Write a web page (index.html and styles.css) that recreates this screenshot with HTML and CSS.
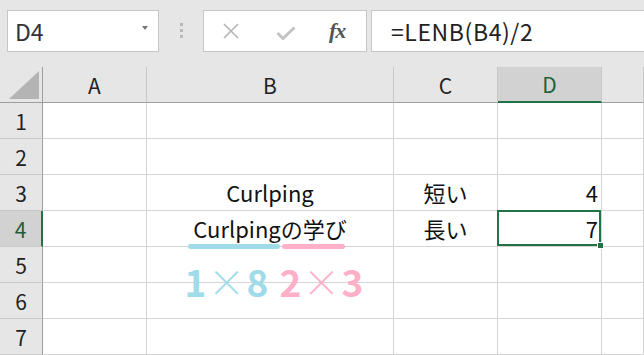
FILE: index.html
```html
<!DOCTYPE html>
<html lang="ja">
<head>
    <meta charset="UTF-8">
    <title>LENB</title>
    <link rel="stylesheet" href="styles.css">
</head>
<body>
    <!-- Formula bar -->
    <div class="toolbar">
        <div class="namebox">
            <span>D4</span>
            <span class="arrow"></span>
        </div>
        <div class="grip"><i></i><i></i><i></i></div>
        <div class="fbuttons">
            <svg class="btn-x" viewBox="0 0 18 16"><path d="M2 1L16 15M16 1L2 15" stroke="#b4b4b4" stroke-width="1.6" fill="none"/></svg>
            <svg class="btn-ok" viewBox="0 0 20 14"><path d="M1.5 7L7 12.5L18.5 1.5" stroke="#c4c4c4" stroke-width="3" fill="none"/></svg>
            <span class="fx">fx</span>
        </div>
        <div class="formula">=LENB(B4)/2</div>
    </div>

    <!-- Sheet grid -->
    <div class="sheet">
        <div class="hdr corner"><svg viewBox="0 0 30 28"><polygon points="30,0 30,28 0,28" fill="#b4b4b4"/></svg></div>
        <div class="hdr col">A</div>
        <div class="hdr col">B</div>
        <div class="hdr col">C</div>
        <div class="hdr col active">D</div>
        <div class="hdr col"></div>

        <div class="hdr row">1</div>
        <div class="cell"></div><div class="cell"></div><div class="cell"></div><div class="cell"></div><div class="cell"></div>

        <div class="hdr row">2</div>
        <div class="cell"></div><div class="cell"></div><div class="cell"></div><div class="cell"></div><div class="cell"></div>

        <div class="hdr row">3</div>
        <div class="cell"></div>
        <div class="cell center">Curlping</div>
        <div class="cell center">短い</div>
        <div class="cell num">4</div>
        <div class="cell"></div>

        <div class="hdr row active">4</div>
        <div class="cell"></div>
        <div class="cell center">Curlpingの学び</div>
        <div class="cell center">長い</div>
        <div class="cell num selected">7<span class="handle"></span></div>
        <div class="cell"></div>

        <div class="hdr row">5</div>
        <div class="cell"></div><div class="cell"></div><div class="cell"></div><div class="cell"></div><div class="cell"></div>

        <div class="hdr row">6</div>
        <div class="cell"></div><div class="cell"></div><div class="cell"></div><div class="cell"></div><div class="cell"></div>

        <div class="hdr row">7</div>
        <div class="cell"></div><div class="cell"></div><div class="cell"></div><div class="cell"></div><div class="cell"></div>
    </div>

    <!-- Drawn annotation over the sheet -->
    <div class="bar blue"></div>
    <div class="bar pink"></div>
    <div class="calc">
        <span class="d blue-t">1</span><span class="x blue-t">×</span><span class="d blue-t">8</span>
        <span class="d pink-t sep">2</span><span class="x pink-t">×</span><span class="d pink-t">3</span>
    </div>
</body>
</html>
```

FILE: styles.css
```css
/* General */
body {
    margin: 0;
    width: 644px;
    height: 355px;
    overflow: hidden;
    position: relative;
    background: #e6e6e6;
    font-family: "Noto Sans CJK JP", sans-serif;
    color: #222;
}

/* Formula bar */
.toolbar {
    height: 67px;
    display: flex;
    align-items: flex-start;
    padding-top: 10px;
    box-sizing: border-box;
}

.namebox {
    margin-left: 7px;
    width: 152px;
    height: 42px;
    box-sizing: border-box;
    background: #fff;
    border: 1px solid #c6c6c6;
    display: flex;
    align-items: center;
    justify-content: space-between;
    padding: 0 10px 0 7px;
    font-size: 23px;
    color: #333;
}

.arrow {
    width: 0;
    height: 0;
    border-left: 3px solid transparent;
    border-right: 3px solid transparent;
    border-top: 4px solid #777;
    margin-bottom: 6px;
}

.grip {
    margin: 13px 0 0 21px;
    display: flex;
    flex-direction: column;
    gap: 3px;
}

.grip i {
    display: block;
    width: 3px;
    height: 3px;
    background: #b8b8b8;
}

.fbuttons {
    margin-left: 20px;
    width: 164px;
    height: 42px;
    box-sizing: border-box;
    background: #fff;
    border: 1px solid #c6c6c6;
    display: flex;
    align-items: center;
    padding-left: 18px;
}

.btn-x {
    width: 18px;
    height: 16px;
}

.btn-ok {
    width: 20px;
    height: 14px;
    margin-left: 36px;
    margin-top: 4px;
}

.fx {
    margin-left: 33px;
    font-family: "Liberation Serif", serif;
    font-style: italic;
    font-weight: bold;
    font-size: 22px;
    color: #555;
    letter-spacing: -1px;
}

.formula {
    margin-left: 4px;
    flex: 1;
    height: 42px;
    box-sizing: border-box;
    background: #fff;
    border: 1px solid #c6c6c6;
    border-right: none;
    padding-left: 19px;
    font-size: 23px;
    letter-spacing: 0.6px;
    line-height: 40px;
    color: #222;
}

/* Sheet grid */
.sheet {
    display: grid;
    grid-template-columns: 43px 104px 247px 104px 104px 1fr;
    grid-auto-rows: 36px;
    background: #fff;
}

.hdr {
    background: #e6e6e6;
    box-sizing: border-box;
    display: flex;
    align-items: center;
    justify-content: center;
    font-size: 21px;
    color: #222;
}

.hdr.col {
    border-right: 1px solid #c8c8c8;
    border-bottom: 1px solid #9e9e9e;
}

.hdr.col.active {
    background: #d2d2d2;
    color: #1e5e3a;
    border-bottom: 2px solid #217346;
}

.hdr.corner {
    border-right: 1px solid #9e9e9e;
    border-bottom: 1px solid #9e9e9e;
    align-items: flex-end;
    justify-content: flex-end;
    padding: 0 3px 3px 0;
}

.hdr.corner svg {
    width: 30px;
    height: 28px;
}

.hdr.row {
    border-right: 1px solid #9e9e9e;
    border-bottom: 1px solid #c8c8c8;
}

.hdr.row.active {
    background: #d2d2d2;
    color: #1e5e3a;
    border-right: 2px solid #217346;
}

.cell {
    box-sizing: border-box;
    border-right: 1px solid #d4d4d4;
    border-bottom: 1px solid #d4d4d4;
    font-size: 22px;
    color: #111;
    display: flex;
    align-items: center;
    padding-bottom: 2px;
    position: relative;
}

.cell.center {
    justify-content: center;
}

.cell.num {
    justify-content: flex-end;
    padding-right: 3px;
}

.cell.selected::after {
    content: "";
    position: absolute;
    left: -1px;
    top: -1px;
    right: 0;
    bottom: 0;
    border: 2px solid #217346;
}

.handle {
    position: absolute;
    right: -3px;
    bottom: -3px;
    width: 5px;
    height: 5px;
    background: #217346;
    border: 1px solid #fff;
    z-index: 1;
}

/* Annotation */
.bar {
    position: absolute;
    top: 244px;
    height: 5px;
    border-radius: 3px;
}

.bar.blue {
    left: 188px;
    width: 92px;
    background: #a0dbea;
}

.bar.pink {
    left: 282px;
    width: 63px;
    background: #ffb0c9;
}

.calc {
    position: absolute;
    left: 180px;
    top: 261px;
    display: flex;
    height: 40px;
    align-items: center;
    font-size: 37px;
    line-height: 40px;
}

.calc span {
    width: 31px;
    text-align: center;
    display: flex;
    justify-content: center;
}

.calc .d {
    font-weight: bold;
}

.calc .x {
    font-weight: 200;
    font-size: 37px;
}

.calc .sep {
    margin-left: 2px;
}

.blue-t {
    color: #a0dbea;
}

.pink-t {
    color: #ffb0c9;
}
```
